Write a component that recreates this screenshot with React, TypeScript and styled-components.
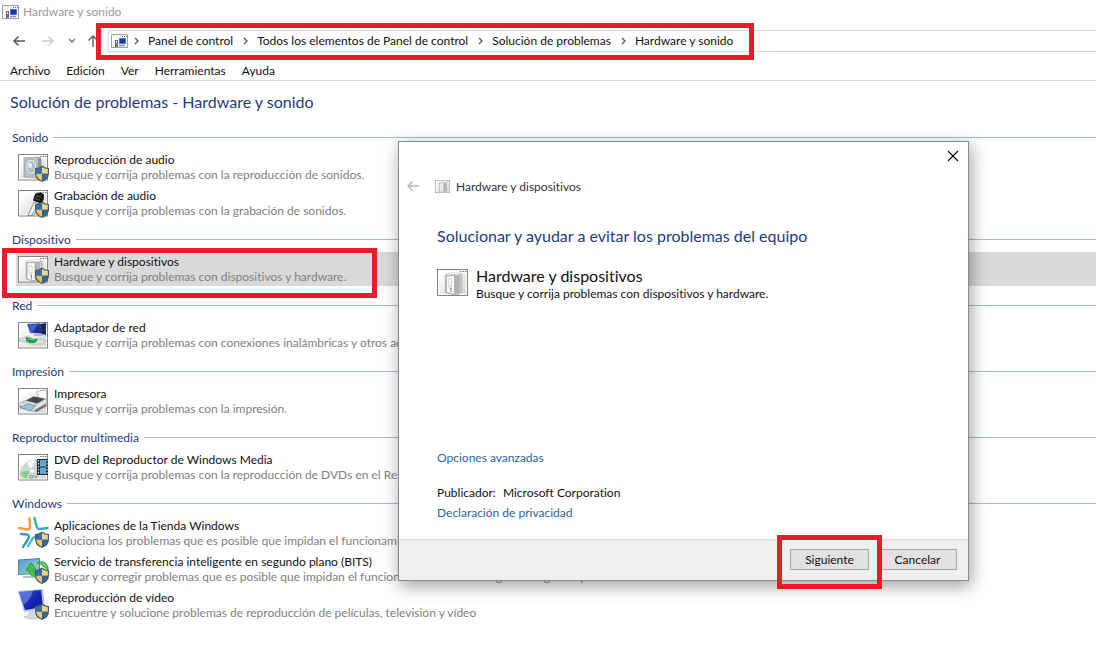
import React from 'react';
import styled, { createGlobalStyle } from 'styled-components';

const GlobalStyle = createGlobalStyle`
  * { box-sizing: border-box; }
  body {
    margin: 0;
    background: #fff;
    color: #111;
    font-family: Lato, 'Noto Sans', sans-serif;
    font-size: 12px;
    font-variant-ligatures: none;
    line-height: 16px;
    overflow: hidden;
  }
  button { font: inherit; font-variant-ligatures: none; color: inherit; }
  a { color: inherit; text-decoration: none; }
  svg { display: block; flex: none; }
`;

const Window = styled.div`
  position: relative;
  min-height: 100vh;
`;

const TitleBar = styled.header`
  display: flex;
  align-items: center;
  gap: 4px;
  height: 24px;
  padding-left: 2px;
  color: #999;
`;

const NavBar = styled.nav`
  display: flex;
  align-items: center;
  height: 34px;
  padding-left: 10px;
`;

const NavButton = styled.button<{ $width: number }>`
  display: flex;
  justify-content: center;
  flex: none;
  width: ${(p) => p.$width}px;
  padding: 0;
  border: 0;
  background: none;
`;

const AddressBar = styled.div`
  position: relative;
  display: flex;
  align-items: center;
  flex: 1;
  height: 22px;
  padding-left: 2px;
  border: 1px solid #d9d9d9;
  border-right: 0;
`;

const Crumb = styled.button`
  flex: none;
  padding: 0 4px 0 0;
  border: 0;
  background: none;
  white-space: nowrap;
`;

const Chevron = styled.svg`
  margin: 0 9px 0 6px;
`;

const MenuBar = styled.div`
  display: flex;
  align-items: center;
  gap: 16px;
  height: 23px;
  padding: 3px 0 0 10px;
  border-bottom: 1px solid #d9d9d9;
`;

const MenuItem = styled.button`
  padding: 0;
  border: 0;
  background: none;
`;

const PageTitle = styled.h1`
  margin: 0;
  padding: 9px 10px 6px;
  color: #1e3c7b;
  font-size: 16px;
  font-weight: 400;
  line-height: 24px;
`;

const Section = styled.section`
  display: flow-root;
`;

const SectionHeader = styled.h2`
  display: flex;
  align-items: center;
  gap: 5px;
  height: 30px;
  margin: 0;
  padding: 5px 0 0 12px;
  color: #1e3c7b;
  font-size: 12px;
  font-weight: 400;

  &::after {
    content: '';
    flex: 1;
    height: 1px;
    background: #a3b9d6;
  }
`;

const Item = styled.a<{ $selected?: boolean }>`
  position: relative;
  display: flex;
  gap: 5px;
  height: 34px;
  margin: 0 0 2px 16px;
  padding: 1px 0 0 1px;
  background: ${(p) => (p.$selected ? '#d9d9d9' : 'transparent')};
  white-space: nowrap;
`;

const ItemText = styled.span`
  display: flex;
  flex-direction: column;
  padding-top: 1px;
  line-height: 15px;
`;

const Muted = styled.span`
  color: #808080;
`;

const Highlight = styled.span<{ $top: number; $left: number; $width: number; $height: number }>`
  position: absolute;
  top: ${(p) => p.$top}px;
  left: ${(p) => p.$left}px;
  width: ${(p) => p.$width}px;
  height: ${(p) => p.$height}px;
  border: 5px solid #e01f28;
  pointer-events: none;
`;

const Dialog = styled.div`
  position: absolute;
  top: 141px;
  left: 398px;
  display: flex;
  flex-direction: column;
  width: 571px;
  height: 440px;
  border: 1px solid #8c8c8c;
  background: #fff;
  box-shadow: 2px 5px 16px rgba(0, 0, 0, 0.38);
`;

const DialogTop = styled.div`
  display: flex;
  justify-content: flex-end;
  padding: 8px 9px 0;
`;

const CloseButton = styled.button`
  padding: 0;
  border: 0;
  background: none;
`;

const DialogCaption = styled.div`
  display: flex;
  align-items: center;
  height: 20px;
  margin-top: 14px;
  padding-left: 7px;
  color: #333;
`;

const CaptionText = styled.span`
  padding: 1px 0 0 6px;
`;

const BackButton = styled(CloseButton)`
  margin-right: 15px;
`;

const DialogBody = styled.div`
  display: flex;
  flex: 1;
  flex-direction: column;
  align-items: flex-start;
  padding: 28px 38px 18px;
`;

const DialogTitle = styled.h2`
  margin: 0 0 18px;
  color: #1e3c7b;
  font-size: 16px;
  font-weight: 400;
  line-height: 24px;
`;

const Tool = styled.div`
  display: flex;
  gap: 8px;
  margin-bottom: auto;

  svg { margin-top: 3px; }
`;

const ToolName = styled.div`
  font-size: 16px;
  line-height: 20px;
`;

const Link = styled.a`
  color: #1f65a3;
`;

const Publisher = styled.p`
  display: flex;
  gap: 7px;
  margin: 19px 0 4px;
`;

const DialogFooter = styled.footer`
  display: flex;
  justify-content: flex-end;
  gap: 9px;
  height: 41px;
  padding: 9px 11px;
  border-top: 1px solid #dcdcdc;
  background: #efefef;
`;

const PushButton = styled.button`
  display: block;
  width: 79px;
  height: 21px;
  padding: 0;
  border: 1px solid #a9a9a9;
  background: #e1e1e1;
  line-height: 16px;
`;

const ButtonSlot = styled.div`
  position: relative;
  z-index: 1;
`;

const Shield = () => (
  <g>
    <path d="M25 14.500q3.500 2.500 7 2.500v5.500q0 6-7 8.500q-7-2.500-7-8.500V17q3.500 0 7-2.500z" fill="#4f5b61" />
    <path d="M25 16v6.800h-5.800V18q3.500-.2 5.800-2z" fill="#2f70b3" />
    <path d="M25 16v6.800h5.800V18q-3.500-.2-5.800-2z" fill="#f4d47c" />
    <path d="M25 22.800v7q-5.300-2.300-5.800-7z" fill="#ebc35c" />
    <path d="M25 22.800v7q5.300-2.300 5.800-7z" fill="#2a67a8" />
  </g>
);

const Frame = () => (
  <g>
    <rect x="1.500" y="3.500" width="29" height="25.500" fill="#fff" stroke="#858585" />
    <rect x="3" y="7.500" width="26" height="20" fill="url(#panel)" />
    <path d="M23 5.500h1.500M25.500 5.500h1.500M28 5.500h1.500" stroke="#777" />
  </g>
);

const Tower = () => (
  <g>
    <path d="M9 9l5-2h9l2 1v17l-3 3h-6l-7-2z" fill="#c9cccc" stroke="#a3a3a3" strokeWidth=".6" />
    <path d="M18 10l5-1v17l-5 2z" fill="#b1b5b5" />
    <path d="M10 10l8-1v19l-8-2z" fill="#fafafa" stroke="#979797" strokeWidth=".7" />
    <path d="M12 13l3-.5V20h-3z" fill="#fff" stroke="#a7a7a7" strokeWidth=".5" />
    <path d="M13 22h1.500v4" stroke="#8d8d8d" fill="none" />
    <path d="M11 9l4-1.500h8" stroke="#fff" fill="none" />
  </g>
);

type IconName = 'speaker' | 'mic' | 'tower' | 'network' | 'printer' | 'dvd' | 'apps' | 'bits' | 'monitor';

const drawings: Record<IconName, React.ReactNode> = {
  speaker: (
    <>
      <Frame />
      <path d="M7 7l14-1 3 1v19l-3 1-14-1z" fill="#bcc2c5" stroke="#94999b" strokeWidth=".7" />
      <path d="M21 6l3 1v19l-3 1z" fill="#8a9398" />
      <ellipse cx="14" cy="16" rx="6" ry="8" fill="#dde1e3" stroke="#8f9ba1" strokeWidth=".8" />
      <ellipse cx="14" cy="16" rx="4" ry="6" fill="#b0bdc6" />
      <ellipse cx="13" cy="14.500" rx="2" ry="2.800" fill="#e6edf0" />
      <Shield />
    </>
  ),
  mic: (
    <>
      <Frame />
      <path d="M17 15l6 2.500-6 11h-6z" fill="#f4f4f4" stroke="#777" strokeWidth=".8" />
      <path d="M21 18l-5 10h-2z" fill="#aaa" />
      <path d="M18 7q5-3 9 .5q.5 5-2 9.500l-9-3.500z" fill="#191919" />
      <path d="M19 9l5 1M18 11.500l5 1.500" fill="none" stroke="#666" strokeWidth=".8" />
      <Shield />
    </>
  ),
  tower: (
    <>
      <Frame />
      <Tower />
      <Shield />
    </>
  ),
  network: (
    <>
      <Frame />
      <path d="M10 5l13-1 3 11-13-1z" fill="#222f9c" stroke="#dde" strokeWidth=".6" />
      <path d="M12 6l9-1-6 9h-2z" fill="#4660d1" />
      <path d="M23 5l6-1v12l-4-1z" fill="#17255e" />
      <path d="M17 15h9v2h-9z" fill="#abc" />
      <path d="M2 20l9-3 5 3h9l5 2-4 3H14l-6-2-6-1z" fill="#d9dfdf" stroke="#9aa4a4" strokeWidth=".5" />
      <path d="M9 18l7 2h5l-3 4h-5l-4-2z" fill="#159e3a" />
      <path d="M10 20l8 1" stroke="#6adb70" />
    </>
  ),
  printer: (
    <>
      <Frame />
      <path d="M20 6l9-1 1 10-9 3z" fill="#f7f7f7" stroke="#999" strokeWidth=".6" />
      <path d="M3 18l13-6 14 2v7l-11 6-16-4z" fill="#d0d2d3" stroke="#8b8e90" strokeWidth=".6" />
      <path d="M9 15.500l8-4 11 2.500-8 4.500z" fill="#44494c" />
      <path d="M3 19l15 4 11-7" fill="none" stroke="#fff" />
      <path d="M3 22l8-3 8 2-6 5z" fill="#9cc6d9" stroke="#5c7e90" strokeWidth=".6" />
      <path d="M18 25l11-6v2l-10 6z" fill="#656b6f" />
    </>
  ),
  dvd: (
    <>
      <Frame />
      <path d="M3 23q2-13 17-14v18H6q-3-1-3-4z" fill="#d2d7d8" stroke="#b3b8b9" strokeWidth=".6" />
      <path d="M14 19L4 21q0 5 5 6.500z" fill="#86cf82" />
      <path d="M14 19L10 12q4-3 8-3z" fill="#fafafa" />
      <ellipse cx="15" cy="20" rx="3" ry="2.500" fill="#fff" stroke="#a6abad" strokeWidth=".6" />
      <path d="M20 8h11v16H20z" fill="#252d33" />
      <path d="M23 9h6v6.500h-6zM23 16.500h6V23h-6z" fill="#62a9d2" />
      <path d="M21.500 9v15M30 9v15" stroke="#e7e7e7" strokeDasharray="1.500 1.500" />
      <path d="M13 24.500h3v2.500h-3zM18 24.500l1 2.500 1-2.500" fill="none" stroke="#888" strokeWidth=".8" />
    </>
  ),
  apps: (
    <>
      <g fill="none" strokeWidth="2.400" strokeLinecap="round" strokeLinejoin="round">
        <path d="M2 11l8 1.500q3 0 3-3L12.500 1" stroke="#ee9f42" />
        <path d="M17.500 1l2 8q1 3.500 4 3l7-1" stroke="#3fa9bd" />
        <path d="M4 17l6 .5q3 1 1.500 4L6 30" stroke="#3a9cbc" />
        <path d="M11 29l5-8q1.500-1.500 3 0" stroke="#52bdd0" />
      </g>
      <Shield />
    </>
  ),
  bits: (
    <>
      <path d="M1 6.500l22-1.500v16L1 22z" fill="#5a8097" />
      <path d="M2 7.500l20-1.300v14L2 21z" fill="url(#screen)" />
      <path d="M6 23h8l3 2H6z" fill="#b8c3c9" />
      <path d="M9 17l5-7 5 6-2.500.5q1 4 4.500 5v3q-9-.5-9.500-7.500z" fill="#43c543" stroke="#258a31" strokeWidth=".8" />
      <path d="M20 10q8-4 11 4v3l-4-3q-2-3-7-4z" fill="#5fd058" stroke="#258a31" strokeWidth=".8" />
      <Shield />
    </>
  ),
  monitor: (
    <>
      <path d="M1 2l25-2 2 20-21 3z" fill="#b9c1d4" />
      <path d="M2 3l22-2 2 17-18 3z" fill="url(#blue)" />
      <path d="M2 3l14-1.300Q14 11 6 16z" fill="#7d94ee" opacity=".6" />
      <path d="M12 23l7-1v4l3 3q-8 3-15-1l5-2z" fill="#d5dade" stroke="#a6adb2" strokeWidth=".5" />
      <Shield />
    </>
  ),
};

const ItemIcon = ({ name }: { name: IconName }) => (
  <svg width="32" height="32" viewBox="0 0 32 32" aria-hidden="true">
    {drawings[name]}
  </svg>
);

const ToolIcon = ({ width, height }: { width: number; height: number }) => (
  <svg width={width} height={height} viewBox="1 3 30 26.500" preserveAspectRatio="none" aria-hidden="true">
    <Frame />
    <Tower />
  </svg>
);

const PanelIcon = () => (
  <svg width="17" height="14" viewBox="0 0 17 14" aria-hidden="true">
    <path d="M.5.500h16v13H.500z" fill="#f8f9fa" stroke="#9b9ea3" />
    <path d="M11 2.500h1M13 2.500h1M15 2.500h1" stroke="#666" />
    <path d="M4 6h3v7H4z" fill="#68727b" />
    <path d="M5 7h1v2H5z" fill="#e4e7e9" />
    <path d="M8.500 4.500h6v5h-6z" fill="#1733b8" stroke="#5c6fc0" />
    <path d="M8 11.500h6" stroke="#8a92a0" strokeWidth="1.500" />
  </svg>
);

const Arrow = ({ color, flip }: { color: string; flip?: boolean }) => (
  <svg width="14" height="12" viewBox="0 0 14 12" fill="none" stroke={color} strokeWidth="1.500" aria-hidden="true">
    <path d={flip ? 'M1 6h11M7.500 1.500L12 6l-4.500 4.500' : 'M13 6H2M6.500 1.500L2 6l4.500 4.500'} />
  </svg>
);

const Gradients = () => (
  <svg width="0" height="0" aria-hidden="true">
    <defs>
      <linearGradient id="panel" x2="1" y2="1">
        <stop stopColor="#fff" />
        <stop offset="1" stopColor="#d5d8d8" />
      </linearGradient>
      <linearGradient id="screen" x2="1" y2="1">
        <stop stopColor="#4e9ccb" />
        <stop offset="1" stopColor="#a2d5d0" />
      </linearGradient>
      <linearGradient id="blue" x2="1" y2="1">
        <stop stopColor="#2740c9" />
        <stop offset="1" stopColor="#0a149c" />
      </linearGradient>
    </defs>
  </svg>
);

interface Troubleshooter {
  icon: IconName;
  name: string;
  text: string;
  selected?: boolean;
}

const sections: { title: string; items: Troubleshooter[] }[] = [
  {
    title: 'Sonido',
    items: [
      { icon: 'speaker', name: 'Reproducción de audio', text: 'Busque y corrija problemas con la reproducción de sonidos.' },
      { icon: 'mic', name: 'Grabación de audio', text: 'Busque y corrija problemas con la grabación de sonidos.' },
    ],
  },
  {
    title: 'Dispositivo',
    items: [
      { icon: 'tower', name: 'Hardware y dispositivos', text: 'Busque y corrija problemas con dispositivos y hardware.', selected: true },
    ],
  },
  {
    title: 'Red',
    items: [
      { icon: 'network', name: 'Adaptador de red', text: 'Busque y corrija problemas con conexiones inalámbricas y otros adaptadores de red.' },
    ],
  },
  {
    title: 'Impresión',
    items: [{ icon: 'printer', name: 'Impresora', text: 'Busque y corrija problemas con la impresión.' }],
  },
  {
    title: 'Reproductor multimedia',
    items: [
      { icon: 'dvd', name: 'DVD del Reproductor de Windows Media', text: 'Busque y corrija problemas con la reproducción de DVDs en el Reproductor de Windows Media.' },
    ],
  },
  {
    title: 'Windows',
    items: [
      { icon: 'apps', name: 'Aplicaciones de la Tienda Windows', text: 'Soluciona los problemas que es posible que impidan el funcionamiento de las aplicaciones.' },
      { icon: 'bits', name: 'Servicio de transferencia inteligente en segundo plano (BITS)', text: 'Buscar y corregir problemas que es posible que impidan el funcionamiento de descargas en segundo plano' },
      { icon: 'monitor', name: 'Reproducción de vídeo', text: 'Encuentre y solucione problemas de reproducción de películas, televisión y vídeo' },
    ],
  },
];

const path = ['Panel de control', 'Todos los elementos de Panel de control', 'Solución de problemas', 'Hardware y sonido'];
const menus = ['Archivo', 'Edición', 'Ver', 'Herramientas', 'Ayuda'];

export default function App() {
  return (
    <Window>
      <GlobalStyle />
      <TitleBar>
        <PanelIcon />
        Hardware y sonido
      </TitleBar>
      <NavBar>
        <NavButton $width={18} aria-label="Atrás"><Arrow color="#555" /></NavButton>
        <NavButton $width={40} aria-label="Adelante"><Arrow color="#ccc" flip /></NavButton>
        <NavButton $width={8} aria-label="Recientes">
          <svg width="8" height="6" viewBox="0 0 8 6" fill="none" stroke="#777" strokeWidth="1.500"><path d="M1 1l3 3 3-3" /></svg>
        </NavButton>
        <NavButton $width={32} aria-label="Subir">
          <svg width="12" height="14" viewBox="0 0 12 14" fill="none" stroke="#666" strokeWidth="1.500"><path d="M7 13V2M2.500 6.500L7 2l4.500 4.500" /></svg>
        </NavButton>
        <AddressBar>
          <PanelIcon />
          {path.map((step) => (
            <React.Fragment key={step}>
              <Chevron width="5" height="8" viewBox="0 0 5 8" fill="none" stroke="#555" strokeWidth="1.300">
                <path d="M1 1l3 3-3 3" />
              </Chevron>
              <Crumb>{step}</Crumb>
            </React.Fragment>
          ))}
          <Highlight $top={-8} $left={-13} $width={658} $height={37} />
        </AddressBar>
      </NavBar>
      <MenuBar>
        {menus.map((menu) => (
          <MenuItem key={menu}>{menu}</MenuItem>
        ))}
      </MenuBar>
      <main>
        <PageTitle>Solución de problemas - Hardware y sonido</PageTitle>
        {sections.map((section) => (
          <Section key={section.title}>
            <SectionHeader>{section.title}</SectionHeader>
            {section.items.map((item) => (
              <Item key={item.name} href="#" $selected={item.selected}>
                <ItemIcon name={item.icon} />
                <ItemText>
                  <span>{item.name}</span>
                  <Muted>{item.text}</Muted>
                </ItemText>
                {item.selected && <Highlight $top={-4} $left={-14} $width={375} $height={50} />}
              </Item>
            ))}
          </Section>
        ))}
      </main>
      <Dialog role="dialog" aria-label="Hardware y dispositivos">
        <DialogTop>
          <CloseButton aria-label="Cerrar">
            <svg width="12" height="12" viewBox="0 0 12 12" stroke="#111" strokeWidth="1.200"><path d="M1 1l10 10M11 1L1 11" /></svg>
          </CloseButton>
        </DialogTop>
        <DialogCaption>
          <BackButton aria-label="Atrás"><Arrow color="#bbb" /></BackButton>
          <ToolIcon width={15} height={13} />
          <CaptionText>Hardware y dispositivos</CaptionText>
        </DialogCaption>
        <DialogBody>
          <DialogTitle>Solucionar y ayudar a evitar los problemas del equipo</DialogTitle>
          <Tool>
            <ToolIcon width={31} height={27} />
            <div>
              <ToolName>Hardware y dispositivos</ToolName>
              <div>Busque y corrija problemas con dispositivos y hardware.</div>
            </div>
          </Tool>
          <Link href="#">Opciones avanzadas</Link>
          <Publisher>
            <span>Publicador:</span>
            <span>Microsoft Corporation</span>
          </Publisher>
          <Link href="#">Declaración de privacidad</Link>
        </DialogBody>
        <DialogFooter>
          <ButtonSlot>
            <PushButton>Siguiente</PushButton>
            <Highlight $top={-14} $left={-13} $width={105} $height={54} />
          </ButtonSlot>
          <PushButton>Cancelar</PushButton>
        </DialogFooter>
      </Dialog>
      <Gradients />
    </Window>
  );
}
